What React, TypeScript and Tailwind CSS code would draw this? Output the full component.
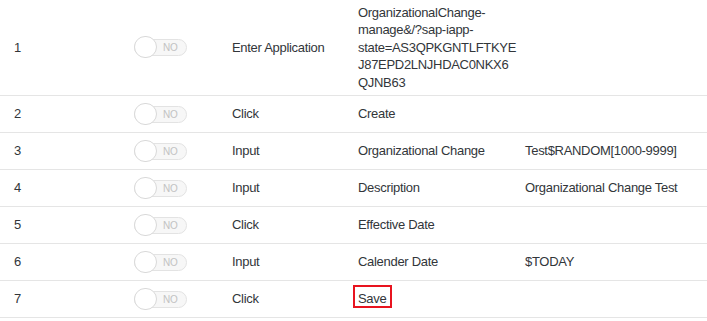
import React from "react";

type Step = {
  no: number;
  action: string;
  target: string[];
  value?: string;
  highlight?: boolean;
};

const steps: Step[] = [
  {
    no: 1,
    action: "Enter Application",
    target: [
      "OrganizationalChange-",
      "manage&/?sap-iapp-",
      "state=AS3QPKGNTLFTKYE",
      "J87EPD2LNJHDAC0NKX6",
      "QJNB63",
    ],
  },
  { no: 2, action: "Click", target: ["Create"] },
  { no: 3, action: "Input", target: ["Organizational Change"], value: "Test$RANDOM[1000-9999]" },
  { no: 4, action: "Input", target: ["Description"], value: "Organizational Change Test" },
  { no: 5, action: "Click", target: ["Effective Date"] },
  { no: 6, action: "Input", target: ["Calender Date"], value: "$TODAY" },
  { no: 7, action: "Click", target: ["Save"], highlight: true },
];

function Toggle() {
  return (
    <div className="relative flex h-[22px] w-[53px] items-center">
      {/* track */}
      <div className="absolute left-0 right-0 top-[3px] h-[17px] rounded-full border border-[#e3e3e3] bg-[#f7f7f7]" />
      <span className="absolute left-[29px] top-[3px] text-[10px] leading-[17px] text-[#c2c2c2]">NO</span>
      {/* knob */}
      <div className="relative h-[22px] w-[23px] rounded-full border border-[#d9d9d9] bg-white" />
    </div>
  );
}

export default function App() {
  return (
    <div
      className="w-[707px] bg-white text-[13px] tracking-[-0.3px] text-[#32363a]"
      style={{ fontFamily: '"Liberation Sans", Arial, sans-serif' }}
    >
      {steps.map((s) => (
        <div
          key={s.no}
          className="grid min-h-[37px] grid-cols-[120px_99px_125px_167px_1fr] items-center border-b border-[#e5e5e5]"
        >
          <div className="pl-[14px]">{s.no}</div>
          <div className="pl-[14px]">
            <Toggle />
          </div>
          <div className="pl-[13px]">{s.action}</div>
          <div className={`pl-[14px] leading-[17.5px] ${s.target.length > 1 ? "py-[3.5px]" : ""}`}>
            {s.highlight ? (
              <span className="relative">
                {s.target[0]}
                <span className="absolute left-[-5px] right-[-6px] top-[-6px] bottom-[-2px] border-2 border-[#e8141f]" />
              </span>
            ) : (
              s.target.map((line) => <div key={line}>{line}</div>)
            )}
          </div>
          <div className="pl-[14px]">{s.value}</div>
        </div>
      ))}
    </div>
  );
}
